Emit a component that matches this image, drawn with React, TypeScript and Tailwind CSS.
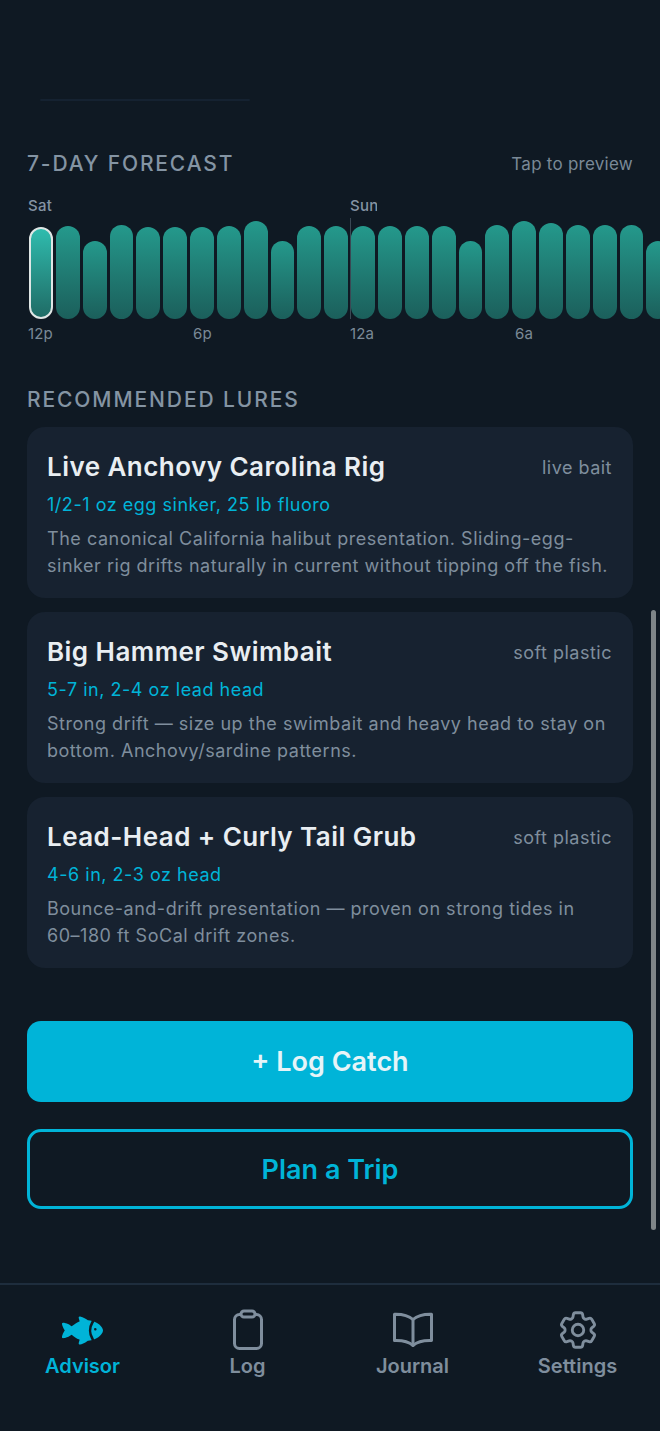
import { IoFish } from 'react-icons/io5';
import { HiOutlineCog6Tooth } from 'react-icons/hi2';

const HOUR_TOPS = [227, 226, 241, 225, 227, 227, 227, 226, 221, 241, 226, 226, 226, 226, 226, 226, 241, 225, 221, 223, 225, 225, 225, 241, 225];

const LURES = [
  {
    name: 'Live Anchovy Carolina Rig',
    kind: 'live bait',
    rig: '1/2-1 oz egg sinker, 25 lb fluoro',
    note: 'The canonical California halibut presentation. Sliding-egg-sinker rig drifts naturally in current without tipping off the fish.',
  },
  {
    name: 'Big Hammer Swimbait',
    kind: 'soft plastic',
    rig: '5-7 in, 2-4 oz lead head',
    note: 'Strong drift — size up the swimbait and heavy head to stay on bottom. Anchovy/sardine patterns.',
  },
  {
    name: 'Lead-Head + Curly Tail Grub',
    kind: 'soft plastic',
    rig: '4-6 in, 2-3 oz head',
    note: 'Bounce-and-drift presentation — proven on strong tides in 60–180 ft SoCal drift zones.',
  },
];

function ClipboardIcon() {
  return (
    <svg width="32" height="42" viewBox="0 0 32 42" fill="none" stroke="currentColor" strokeWidth="3">
      <rect x="2.5" y="5.5" width="27" height="34" rx="5" />
      <rect x="9" y="2" width="14" height="6" rx="3" fill="#0f1923" />
    </svg>
  );
}

function BookIcon() {
  return (
    <svg width="40" height="36" viewBox="0 0 40 36" fill="none" stroke="currentColor" strokeWidth="3" strokeLinejoin="round" strokeLinecap="round">
      <path d="M20 7.5C15.5 3.5 9 2 1.5 2.2V28.5C9 28.2 15.5 29.5 20 33.5C24.5 29.5 31 28.2 38.5 28.5V2.2C31 2 24.5 3.5 20 7.5Z" />
      <path d="M20 7.5V33.5" />
    </svg>
  );
}

const TABS = [
  { label: 'Advisor', icon: <IoFish size={41} />, active: true },
  { label: 'Log', icon: <ClipboardIcon /> },
  { label: 'Journal', icon: <BookIcon /> },
  { label: 'Settings', icon: <HiOutlineCog6Tooth size={46} /> },
];

function ForecastStrip() {
  return (
    <div className="relative mt-[18px] overflow-hidden">
      <div className="flex h-[20px] items-start pl-[28px] text-[15px] font-medium leading-[20px] tracking-[0.3px] text-[#8494a3]">
        <span className="w-[322px]">Sat</span>
        <span className="w-[27px] overflow-hidden">Sun</span>
      </div>
      <div className="mt-[6px] flex h-[97px] items-end gap-[3px] pl-[29px]">
        {HOUR_TOPS.map((top, i) => (
          <div
            key={i}
            className={
              i === 0
                ? 'w-[23.85px] shrink-0 rounded-[12px] border-2 border-[#dfe6e5] bg-gradient-to-b from-[#2fbcae] to-[#1f6c66]'
                : 'w-[23.85px] shrink-0 rounded-[12px] bg-gradient-to-b from-[#24998c] to-[#1b5f5b]'
            }
            style={{ height: 319 - top }}
          />
        ))}
      </div>
      {/* Day boundary tick */}
      <div className="absolute left-[350px] top-[22px] h-[101px] w-px bg-[#3b4854]" />
      <div className="mt-[6px] flex h-[18px] pl-[28px] text-[15px] leading-[18px] tracking-[0.1px] text-[#7a8997]">
        <span className="w-[165px]">12p</span>
        <span className="w-[157px]">6p</span>
        <span className="w-[165px]">12a</span>
        <span>6a</span>
      </div>
    </div>
  );
}

function LureCard({ lure }: { lure: (typeof LURES)[number] }) {
  return (
    <div className="h-[170.5px] rounded-[18px] bg-[#172230] pl-[20px] pr-[21px] pt-[23px]">
      <div className="flex items-center justify-between">
        <h3 className="text-[26px] font-semibold leading-[34px] tracking-[0.45px] text-[#e9eef2]">{lure.name}</h3>
        <span className="mt-[2px] text-[18px] leading-[24px] tracking-[0.5px] text-[#7f8e9d]">{lure.kind}</span>
      </div>
      <p className="mt-[9px] text-[18px] leading-[24px] tracking-[0.53px] text-[#00b4d8]">{lure.rig}</p>
      <p className="mt-[8px] text-[18px] leading-[27px] tracking-[0.52px] text-[#7f8e9d]">{lure.note}</p>
    </div>
  );
}

export default function App() {
  return (
    <div className="flex h-[1431px] w-[660px] flex-col overflow-hidden bg-[#0f1923] font-['Inter',sans-serif]">
      <div className="relative flex-1 overflow-hidden">
        <div className="ml-[40px] mt-[99px] h-[2px] w-[210px] rounded-full bg-[#152231]" />

        <div className="mt-[49px] flex items-center justify-between px-[27px]">
          <h2 className="text-[21px] font-medium uppercase leading-[28px] tracking-[1.85px] text-[#8494a3]">7-Day Forecast</h2>
          <span className="text-[17px] leading-[28px] tracking-[0.25px] text-[#7a8997]">Tap to preview</span>
        </div>
        <ForecastStrip />

        <h2 className="mt-[43px] px-[27px] text-[21px] font-medium uppercase leading-[28px] tracking-[1.9px] text-[#8494a3]">Recommended Lures</h2>
        <div className="mt-[13px] flex flex-col gap-[14.5px] px-[27px]">
          {LURES.map((lure) => (
            <LureCard key={lure.name} lure={lure} />
          ))}
        </div>

        <div className="mt-[53.5px] flex flex-col gap-[27px] px-[27px]">
          <button className="h-[81px] rounded-[14px] bg-[#00b4d8] pt-[2px] text-[27px] font-semibold text-[#e6f4f8]">+ Log Catch</button>
          <button className="h-[80px] rounded-[14px] border-[3px] border-[#00b4d8] pt-[2px] text-[27px] font-semibold text-[#00b4d8]">Plan a Trip</button>
        </div>

        {/* Scrollbar thumb */}
        <div className="absolute right-[4px] top-[610px] h-[620px] w-[5px] rounded-full bg-[#7e8588]" />
      </div>

      <nav className="flex h-[148px] border-t-2 border-[#1e2d3d] pt-[22px]">
        {TABS.map((tab) => (
          <div
            key={tab.label}
            className={`flex flex-1 flex-col items-center ${tab.active ? 'text-[#00b4d8]' : 'text-[#7f8e9d]'}`}
          >
            <div className="flex h-[46px] items-center justify-center">{tab.icon}</div>
            <span className="-mt-[1px] text-[20px] font-semibold leading-[28px]">{tab.label}</span>
          </div>
        ))}
      </nav>
    </div>
  );
}
